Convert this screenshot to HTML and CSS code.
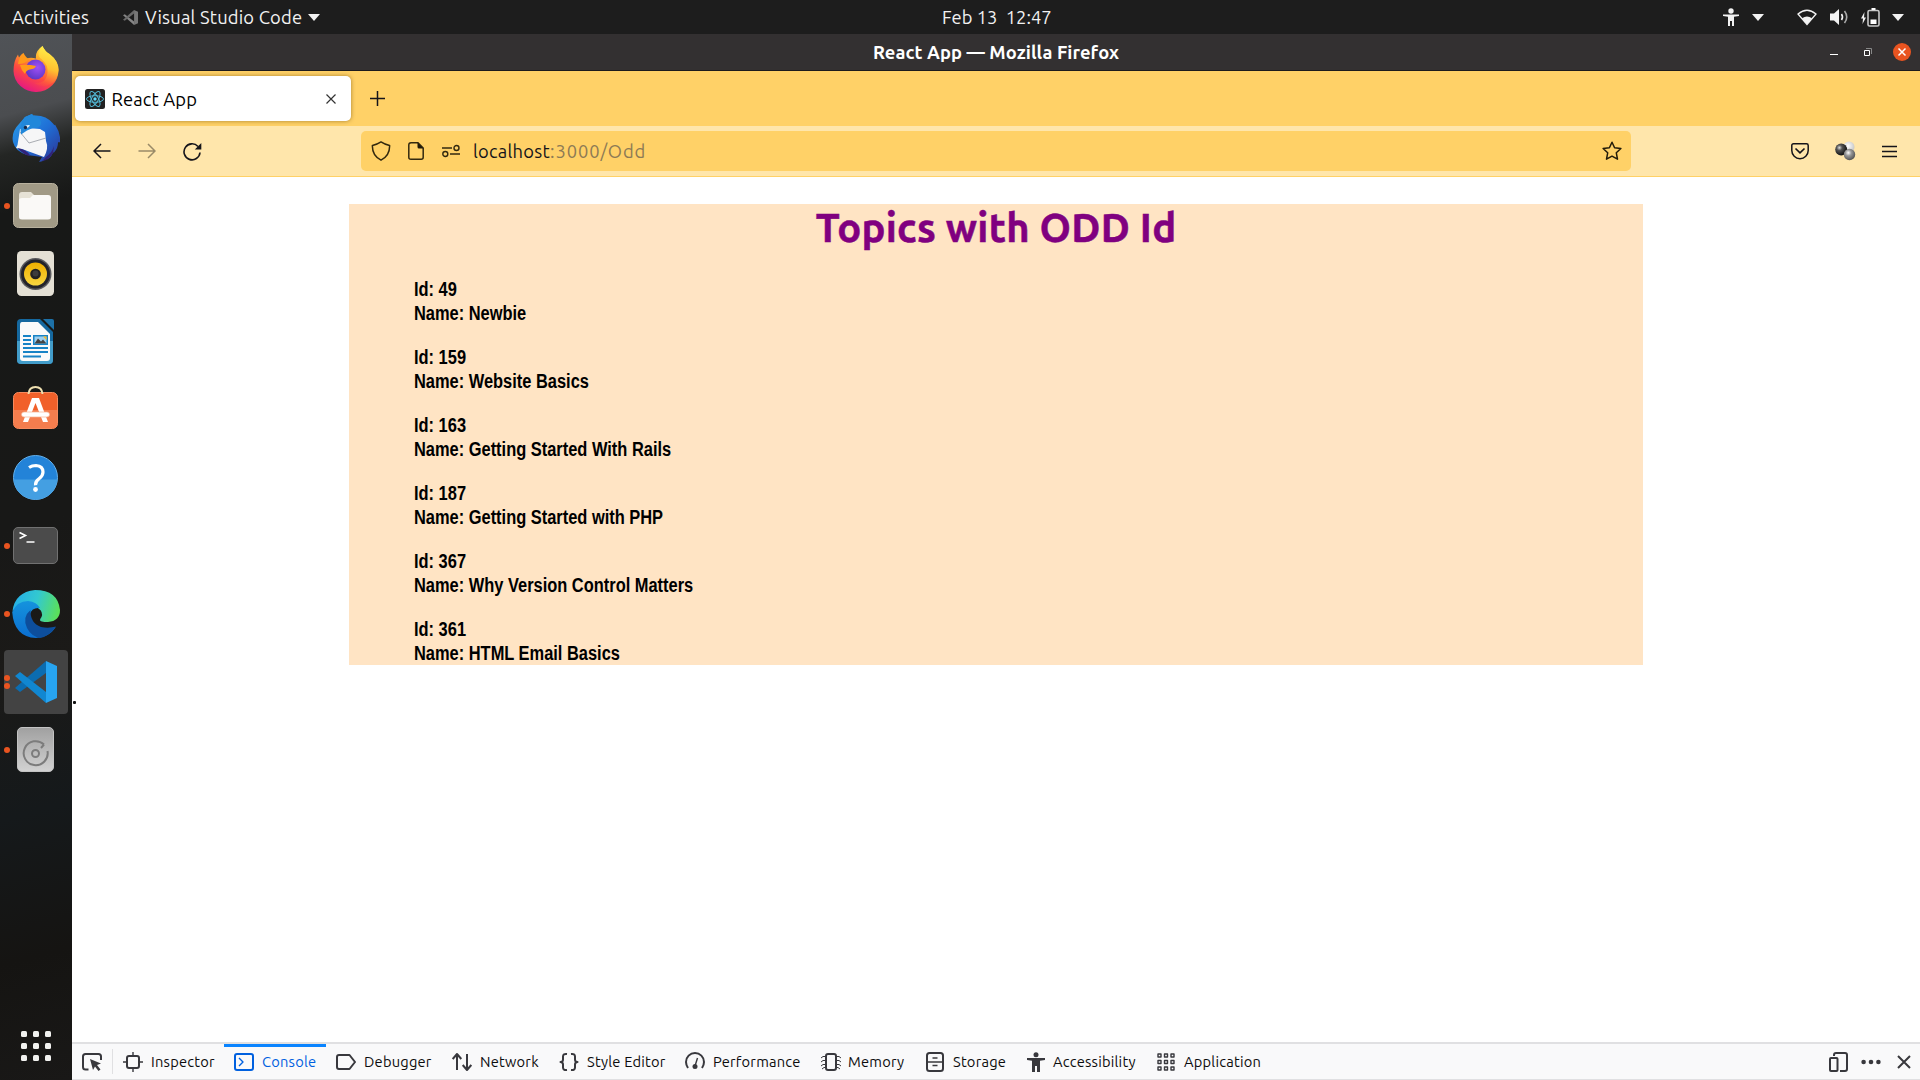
FILE: index.html
```html
<!DOCTYPE html>
<html lang="en">
<head>
<meta charset="utf-8">
<title>React App</title>
<link rel="stylesheet" href="styles.css">
</head>
<body>
<header class="topbar">
  <div class="top-left">
    <span class="t-activities">Activities</span>
    <svg class="vs-mini" width="15" height="15" viewBox="0 0 42 42"><path d="M0 15l5-3 26 20v10L0 15z" fill="#858585"/><path d="M0 27l5 3L31 10V0L0 27z" fill="#6a6a6a"/><path d="M31 0l11 5v32l-11 5z" fill="#777"/></svg>
    <span class="t-vsc">Visual Studio Code</span>
    <i class="caret"></i>
  </div>
  <span class="t-clock">Feb 13&nbsp; 12:47</span>
  <div class="top-right">
    <svg width="16" height="18" viewBox="0 0 16 18" fill="#f2f2f2"><circle cx="8" cy="3" r="2.7"/><path d="M0 6.500h16v1.600l-5 .7V18H9v-5H7v5H5V8.800L0 8.100z"/></svg>
    <i class="caret c1"></i>
    <svg class="wifi" width="20" height="17" viewBox="0 0 20 17"><path d="M1 5Q10-2.500 19 5L10 15.500z" fill="none" stroke="#f2f2f2" stroke-width="1.300"/><path d="M5 9.200q5-3.400 10 0l-5 6.300z" fill="#f2f2f2"/></svg>
    <svg class="vol" width="19" height="18" viewBox="0 0 19 18"><path d="M0 5.500h4L9 1v16l-5-4.500H0z" fill="#f2f2f2"/><path d="M11.500 6q2 3 0 6" fill="none" stroke="#f2f2f2" stroke-width="1.600"/><path d="M14.500 3q4.500 6 0 12" fill="none" stroke="#aaa" stroke-width="1.600"/></svg>
    <svg class="bat" width="19" height="19" viewBox="0 0 19 19"><path d="M3.500 4L0 10.500h2L1.500 16 5 9.500H3z" fill="#f2f2f2"/><path d="M8.500 2.500h8q1.500 0 1.500 1.500v12.500q0 1.500-1.500 1.500h-8Q7 18 7 16.500V4q0-1.500 1.500-1.500z" fill="none" stroke="#c8c8c8" stroke-width="1.600"/><path d="M10.500 0h4v2h-4zM9.500 11.500h6v4.500h-6z" fill="#fff"/></svg>
    <i class="caret c2"></i>
  </div>
</header>
<div class="desktop">
  <nav class="dock">
    <div class="app firefox">
      <svg width="46" height="47" viewBox="0 0 46 47"><defs><linearGradient id="ff" x1=".8" y1="0" x2=".3" y2="1"><stop offset="0" stop-color="#fff44f"/><stop offset=".35" stop-color="#ffa52a"/><stop offset=".65" stop-color="#ff4a40"/><stop offset="1" stop-color="#e31587"/></linearGradient><linearGradient id="ff2" x1=".6" y1="0" x2=".4" y2="1"><stop offset="0" stop-color="#fff24a"/><stop offset=".55" stop-color="#ffc030"/><stop offset="1" stop-color="#ff5a3a" stop-opacity=".2"/></linearGradient><radialGradient id="fp" cx=".6" cy=".4" r=".6"><stop offset="0" stop-color="#a050f5"/><stop offset="1" stop-color="#6038c8"/></radialGradient></defs><path d="M29.500 1q2 5 7 8 9 7 9 16A22.500 21.500 0 0 1 .500 26Q.500 16 5 9.500q.5 2 1 3Q8 9 10.500 8q-.5 4 3 5.500Q18 12 23 13.500 22 6 29.500 1z" fill="url(#ff)"/><path d="M29.500 1q2 5 7 8 9 7 9 16-.5 10-8 14-9 5-16-1 12 1 13-10 1-8-6-14Q22 10 29.500 1z" fill="url(#ff2)"/><circle cx="22.500" cy="24.500" r="10" fill="url(#fp)"/><path d="M5 19q8 0 11-5-3-1-5.500-6Q6 12 5 19zM7 20q8-1 16 1-1 3-6 3.500Q13 25 12 29 8 25 7 20z" fill="#ff9a1a"/></svg>
    </div>
    <div class="app">
      <svg width="48" height="48" viewBox="0 0 48 48"><defs><linearGradient id="tb" x1="0" y1="0" x2="1" y2="1"><stop offset="0" stop-color="#2aa0ea"/><stop offset=".5" stop-color="#1f6fd6"/><stop offset="1" stop-color="#2e2f8f"/></linearGradient></defs><path d="M13 3L20 0l1 1.500q13-1 20 8 2 3 2 1 6 9 5 18-1-1-2 0 0 6-4 10l-1 0q-2 5-6 7l0-2q-3 4-8 4.500l3-5-15-2Q3 37 1 28-1 18 7 10z" fill="url(#tb)"/><path d="M8 15L5.500 31 4 34q3 1 6 1l22 8q5-9 2-16l-1-9-5-3-13-1z" fill="#f6f6f7"/><path d="M8 18l9 11 17-5" fill="none" stroke="#a9acb2" stroke-width="1"/><path d="M13 3L20 0l1 1.500q4 0 7 4 3 5-2 8-6 0-11 3l-6 4q-2-11 4-17.500z" fill="#2187da"/><path d="M13.500 11.500q4-1 4.500 0-2 3-5 3z" fill="#e6eef6"/><circle cx="13.500" cy="13.500" r="1.700" fill="#16294a"/><path d="M5.500 34q9 1 13 8-7-1-13-8zM34 43q6-4 8-11l-1 7q-4 7-11 8z" fill="#322379"/></svg>
    </div>
    <div class="app"><i class="dot"></i>
      <svg width="45" height="45" viewBox="0 0 45 45"><rect x=".5" y=".5" width="44" height="44" rx="5" fill="#a19a86" stroke="#b8b19e"/><path d="M6 12q0-3 3-3h9l3 3v7H6z" fill="#e6e2d6"/><path d="M9 15h8l3-3h15q3 0 3 3v19q0 2.500-3 2.500H9q-3 0-3-2.500V17q0-2 3-2z" fill="#faf9f7"/></svg>
    </div>
    <div class="app">
      <svg width="37" height="45" viewBox="0 0 37 45"><defs><linearGradient id="sp" x1="0" y1="0" x2="0" y2="1"><stop offset="0" stop-color="#f0b000"/><stop offset="1" stop-color="#f7d540"/></linearGradient></defs><rect width="37" height="45" rx="4.500" fill="#e4e0d5"/><circle cx="18.500" cy="23" r="16" fill="#5a5a5e"/><circle cx="18.500" cy="23" r="14.500" fill="#23232a"/><circle cx="18.500" cy="23" r="11.500" fill="url(#sp)"/><circle cx="18.500" cy="23" r="5.300" fill="#222"/><circle cx="18.500" cy="22.500" r="3" fill="#3c3c3c"/></svg>
    </div>
    <div class="app">
      <svg width="37" height="45" viewBox="0 0 37 45"><path d="M4 0h19l13 13v28q0 4-4 4H4q-4 0-4-4V4q0-4 4-4z" fill="#15689f"/><path d="M0 22h36v19q0 4-4 4H4q-4 0-4-4z" fill="#429cc9"/><path d="M5 3h16l12 12v24q0 3-3 3H6q-3 0-3-3V6q0-3 2-3z" fill="#fafafa"/><path d="M26 0h9q2 0 2 2v9z" fill="#1d71a8"/><path d="M6 17h8M6 21h8M6 25h8M6 29h25M6 33h25M6 37.500h18" stroke="#1783c6" stroke-width="2"/><path d="M16 16h15v10H16z" fill="#1783c6"/><path d="M17.500 17.500h12v7h-12z" fill="#9fd0ef"/><path d="M17.500 24.500l3.500-5 3 3 2-2 3.500 4z" fill="#444"/><path d="M26 17.500h3.500V21z" fill="#f5b92c"/></svg>
    </div>
    <div class="app store">
      <svg width="45" height="44" viewBox="0 0 45 44"><rect x=".5" y="7.500" width="44" height="36" rx="5" fill="#f1602a" stroke="#f58a5e"/><path d="M1 25h43v14q0 4-4 4H5q-4 0-4-4z" fill="#f47d4e"/><path d="M15.500 9Q16 2 22.500 2T29.500 9" fill="none" stroke="#eedfb0" stroke-width="2"/><path d="M19 13h7l9 24h-5l-7.500-19L15 37h-5z" fill="#fff"/><rect x="8.500" y="27" width="28" height="5" rx="2.500" fill="#fff" stroke="#f6b190" stroke-width=".7"/></svg>
    </div>
    <div class="app">
      <svg width="45" height="45" viewBox="0 0 45 45"><circle cx="22.500" cy="22.500" r="22" fill="#2383d8" stroke="#63b0ec"/><path d="M1 24.500h43a21.500 20 0 0 1-43 0z" fill="#449fe2"/><path d="M16 12.500q3-2 7-2 7 .500 7 6.500 0 4-4 6.800-4 3-3.500 6.500" fill="none" stroke="#fff" stroke-width="3.200"/><circle cx="22.500" cy="34.500" r="2.400" fill="#fff"/></svg>
    </div>
    <div class="app"><i class="dot"></i>
      <svg width="45" height="37" viewBox="0 0 45 37"><rect x=".5" y=".5" width="44" height="36" rx="4.500" fill="#4b4b4b" stroke="#717171"/><path d="M6.500 5.500l6 3-6 3M13.500 15h8" fill="none" stroke="#fff" stroke-width="1.600"/></svg>
    </div>
    <div class="app"><i class="dot"></i>
      <svg width="48" height="48" viewBox="0 0 48 48"><defs><linearGradient id="eg" x1="0" y1=".3" x2="1" y2=".5"><stop offset="0" stop-color="#24aee8"/><stop offset=".5" stop-color="#33c9cf"/><stop offset="1" stop-color="#5be05a"/></linearGradient><linearGradient id="eb" x1="0" y1="0" x2="0" y2="1"><stop offset="0" stop-color="#1593dd"/><stop offset="1" stop-color="#0b6ed0"/></linearGradient></defs><path d="M.5 21Q3 2 23 0q23 0 25 20 0 11-12 12-8 0-8-2 0-1 1.500-3 2-5-3-8.500Q12 9 .500 21z" fill="url(#eg)"/><path d="M.2 22Q5 11 16 11q9 1 12 7-8-1-10 6-1 13 8 16 9 4 18-3-8 11-20 11Q2 47 .200 22z" fill="url(#eb)"/><path d="M18.500 20Q10 27 15 38q4 8 13 10 10-2 16-11.500-7 2-15 .5-11-4-10.500-17z" fill="#0d4e9c"/></svg>
    </div>
    <div class="app active"><i class="dot d1"></i><i class="dot d2"></i>
      <svg width="42" height="42" viewBox="0 0 42 42"><path d="M0 27l5 4L31 12V0L0 27z" fill="#0b6cb0"/><path d="M0 15l5-4 26 20v11L0 15z" fill="#1187d1"/><path d="M31 0l11 5v32l-11 5z" fill="#27a4f0"/></svg>
    </div>
    <div class="app"><i class="dot"></i>
      <svg width="37" height="45" viewBox="0 0 37 45"><defs><linearGradient id="dk" x1="0" y1="0" x2="0" y2="1"><stop offset="0" stop-color="#a0a0a0"/><stop offset="1" stop-color="#d2d2d2"/></linearGradient></defs><rect x=".5" y=".5" width="36" height="44" rx="4.500" fill="url(#dk)" stroke="#c3c3c3"/><path d="M27 17.500A12 12 0 1 0 30.500 24M27 17.500L24 21" fill="none" stroke="#7c7c7c" stroke-width="2"/><circle cx="18.500" cy="26.500" r="3.500" fill="none" stroke="#7c7c7c" stroke-width="2"/></svg>
    </div>
    <div class="grid-btn"><b></b><b></b><b></b><b></b><b></b><b></b><b></b><b></b><b></b></div>
  </nav>
  <section class="window">
    <div class="titlebar">
      <span class="t-title">React App — Mozilla Firefox</span>
      <div class="win-btns">
        <svg width="8" height="20" viewBox="0 0 8 20"><path d="M0 12.500h8" stroke="#fff"/></svg>
        <svg width="8" height="8" viewBox="0 0 8 8"><path d="M.5 2.500h5v5h-5z" fill="none" stroke="#fff"/><path d="M2 .5h5.500V6" fill="none" stroke="#888"/></svg>
        <svg width="18" height="18" viewBox="0 0 18 18"><circle cx="9" cy="9" r="9" fill="#e95420"/><path d="M5.500 5.500l7 7M12.500 5.500l-7 7" stroke="#fff" stroke-width="1.500"/></svg>
      </div>
    </div>
    <div class="tabs">
      <div class="tab">
        <svg width="20" height="20" viewBox="0 0 20 20"><rect width="20" height="20" rx="2.500" fill="#222"/><g fill="none" stroke="#53b9d6" stroke-width="1"><ellipse cx="10" cy="10" rx="8.500" ry="3.300"/><ellipse cx="10" cy="10" rx="8.500" ry="3.300" transform="rotate(60 10 10)"/><ellipse cx="10" cy="10" rx="8.500" ry="3.300" transform="rotate(120 10 10)"/></g><circle cx="10" cy="10" r="1.700" fill="#61dafb"/></svg>
        <span class="t-tab">React App</span>
        <svg class="tab-x" width="10" height="10" viewBox="0 0 10 10"><path d="M.5.500l9 9M9.500.500l-9 9" stroke="#333" stroke-width="1.200"/></svg>
      </div>
      <svg class="plus" width="15" height="15" viewBox="0 0 15 15"><path d="M7.500 0v15M0 7.500h15" stroke="#15141a" stroke-width="1.500"/></svg>
    </div>
    <div class="toolbar">
      <svg class="back" width="18" height="16" viewBox="0 0 18 16"><path d="M17.500 8H1M8 1L1 8l7 7" fill="none" stroke="#15141a" stroke-width="1.500"/></svg>
      <svg class="fwd" width="18" height="16" viewBox="0 0 18 16"><path d="M.5 8H17M10 1l7 7-7 7" fill="none" stroke="#9a8b68" stroke-width="1.500"/></svg>
      <svg class="reload" width="19" height="19" viewBox="0 0 19 19"><path d="M15 4.500A8 8 0 1 0 17 10.500" fill="none" stroke="#15141a" stroke-width="1.600"/><path d="M18.300 1v6.500h-6.500z" fill="#15141a"/></svg>
      <div class="urlbar">
        <svg class="shield" width="20" height="20" viewBox="0 0 20 20"><path d="M10 .900Q14 3.600 18.600 4.400 19 14.500 10 19.200 1 14.500 1.400 4.400 6 3.600 10 .900z" fill="none" stroke="#33290f" stroke-width="1.500" stroke-linejoin="round"/></svg>
        <svg class="page-ico" width="16" height="18" viewBox="0 0 16 18"><path d="M3 .800h7L15.200 6v9.200q0 2-2 2H3q-2.200 0-2.200-2V3Q.800.800 3 .800z" fill="none" stroke="#33290f" stroke-width="1.500"/><path d="M9.500.500L15.500 6.500h-4.500q-1.500 0-1.500-1.500z" fill="#221b0a"/></svg>
        <svg class="perm" width="18" height="14" viewBox="0 0 18 14"><path d="M0 4h10M8 10h10" stroke="#33290f" stroke-width="1.500"/><circle cx="14.500" cy="4" r="2.500" fill="none" stroke="#33290f" stroke-width="1.400"/><circle cx="3.300" cy="10" r="2.500" fill="none" stroke="#33290f" stroke-width="1.400"/></svg>
        <span class="t-url">localhost<em>:3000/Odd</em></span>
        <svg class="star" width="20" height="20" viewBox="0 0 20 20"><path d="M10 1.200l2.600 5.500 6.300.800-4.600 4.300 1.200 6.400L10 15.200l-5.500 3 1.200-6.400L1.100 7.500l6.300-.8z" fill="none" stroke="#221b0a" stroke-width="1.500" stroke-linejoin="round"/></svg>
      </div>
      <svg class="pocket" width="18" height="17" viewBox="0 0 18 17"><path d="M2.500.800h13q1.700 0 1.700 1.700V7.500a8.200 8.200 0 0 1-16.400 0V2.500Q.800.800 2.500.800z" fill="none" stroke="#15141a" stroke-width="1.500"/><path d="M4.500 5.500L9 9.800l4.500-4.300" fill="none" stroke="#15141a" stroke-width="1.700"/></svg>
      <svg class="balls" width="21" height="20" viewBox="0 0 21 20"><defs><radialGradient id="b1" cx=".35" cy=".35" r=".65"><stop offset="0" stop-color="#ddd"/><stop offset=".35" stop-color="#555"/><stop offset="1" stop-color="#111"/></radialGradient><radialGradient id="b2" cx=".4" cy=".4" r=".7"><stop offset="0" stop-color="#fff"/><stop offset="1" stop-color="#c0c0c0"/></radialGradient><radialGradient id="b3" cx=".4" cy=".35" r=".65"><stop offset="0" stop-color="#fff"/><stop offset=".4" stop-color="#999"/><stop offset="1" stop-color="#555"/></radialGradient></defs><circle cx="14" cy="6" r="5.500" fill="url(#b2)"/><circle cx="6.200" cy="8.500" r="6" fill="url(#b1)"/><circle cx="14.500" cy="13.500" r="5.700" fill="url(#b3)"/></svg>
      <svg class="menu" width="15" height="13" viewBox="0 0 15 13"><path d="M0 1.500h15M0 6.500h15M0 11.500h15" stroke="#15141a" stroke-width="1.500"/></svg>
    </div>
    <main class="page">
      <article class="topics">
        <h1>Topics with ODD Id</h1>
        <p>Id: 49<br>Name: Newbie</p>
        <p>Id: 159<br>Name: Website Basics</p>
        <p>Id: 163<br>Name: Getting Started With Rails</p>
        <p>Id: 187<br>Name: Getting Started with PHP</p>
        <p>Id: 367<br>Name: Why Version Control Matters</p>
        <p>Id: 361<br>Name: HTML Email Basics</p>
      </article>
      <div class="bullet"></div>
    </main>
    <footer class="devtools">
      <div class="picker"><svg width="20" height="18" viewBox="0 0 20 18"><path d="M6.500 16.500H3.500q-2.500 0-2.500-2.500V3.500Q1 1 3.500 1h13Q19 1 19 3.500V7" fill="none" stroke="#38383d" stroke-width="2"/><path d="M8 6l11 4.500-4 1.500 3.500 4.500-2 1.500-3.500-4.500-2 3.500z" fill="#38383d"/></svg></div>
      <div class="dt w1"><svg viewBox="0 0 20 20"><rect x="4" y="4" width="12" height="12" rx="2" class="s"/><path d="M10 0v4M10 16v4M0 10h4M16 10h4" class="s thin"/></svg><span>Inspector</span></div>
      <div class="dt w2 on"><svg viewBox="0 0 20 20"><rect x="1" y="2" width="18" height="16" rx="2" class="s"/><path d="M5 6l4 4-4 4" class="s thin"/></svg><span>Console</span></div>
      <div class="dt w3"><svg viewBox="0 0 20 20"><path d="M3 3h10.500l5.500 7-5.500 7H3q-2 0-2-2V5q0-2 2-2z" class="s"/></svg><span>Debugger</span></div>
      <div class="dt w4"><svg viewBox="0 0 20 20"><path d="M5 18V2M.700 7L5 2l4.300 5M15 2v16M10.700 13l4.300 5 4.300-5" class="s"/></svg><span>Network</span></div>
      <div class="dt w5"><svg viewBox="0 0 20 20"><path d="M8 2q-4-.5-4 2.500v3Q4 10 1.500 10 4 10 4 12.500v3q0 3 4 2.500M12 2q4-.5 4 2.500v3q0 2.500 2.500 2.500-2.500 0-2.500 2.500v3q0 3-4 2.500" class="s"/></svg><span>Style Editor</span></div>
      <div class="dt w6"><svg viewBox="0 0 20 20"><path d="M3 16Q1 13 1 10a9 9 0 0 1 18 0q0 3-2 6" class="s"/><path d="M10 14l2.500-8" class="s thin"/><circle cx="10" cy="14.500" r="2.500" class="f"/></svg><span>Performance</span></div>
      <div class="dt w7"><svg viewBox="0 0 20 20"><rect x="5" y="2" width="10" height="16" rx="2" class="s"/><path d="M0 6l2-1.500h3M0 10l2-1.500h3M0 14l2-1.500h3M1 17l2-1.500h2M20 6l-2-1.500h-3M20 10l-2-1.500h-3M20 14l-2-1.500h-3M19 17l-2-1.500h-2" class="s hair"/></svg><span>Memory</span></div>
      <div class="dt w8"><svg viewBox="0 0 20 20"><rect x="2" y="1" width="16" height="18" rx="2.500" class="s"/><path d="M2 10h16M7.500 6h5M7.500 13.500h5" class="s thin"/></svg><span>Storage</span></div>
      <div class="dt w9"><svg viewBox="0 0 20 20"><circle cx="10" cy="2.700" r="2.500" class="f"/><path d="M1 6h18v2l-5 .800V20h-3v-6H9v6H6V8.800L1 8z" class="f"/></svg><span>Accessibility</span></div>
      <div class="dt w10"><svg viewBox="0 0 20 20"><path d="M2 2h3v3H2zM8.500 2h3v3h-3zM15 2h3v3h-3zM2 8.500h3v3H2zM8.500 8.500h3v3h-3zM15 8.500h3v3h-3zM2 15h3v3H2zM8.500 15h3v3h-3zM15 15h3v3h-3z" class="s thin"/></svg><span>Application</span></div>
      <div class="dt-right">
        <svg width="20" height="20" viewBox="0 0 20 20"><path d="M5 4V3q0-2 2-2h9q2 0 2 2v14q0 2-2 2h-5" class="s"/><rect x="1" y="6" width="7.500" height="13" rx="1" class="s"/></svg>
        <svg width="20" height="20" viewBox="0 0 20 20"><circle cx="2.600" cy="10" r="2.300" class="f"/><circle cx="10" cy="10" r="2.300" class="f"/><circle cx="17.400" cy="10" r="2.300" class="f"/></svg>
        <svg width="14" height="14" viewBox="0 0 14 14"><path d="M1 1l12 12M13 1L1 13" class="s"/></svg>
      </div>
    </footer>
  </section>
</div>
</body>
</html>
```
FILE: styles.css
```css
* { box-sizing: border-box; }
body { margin: 0; width: 1920px; height: 1080px; overflow: hidden; display: flex; flex-direction: column; font-family: Ubuntu, "Noto Sans", sans-serif; font-size: 18.33px; background: #fff; }
svg { display: block; flex: none; }
span { white-space: nowrap; }

.topbar { height: 34px; flex: none; background: #1d1d1d; color: #f2f2f2; display: grid; grid-template-columns: 942px 110px 1fr; align-items: center; line-height: 34px; }
.top-left, .top-right { display: flex; align-items: center; }
.top-left { padding-left: 12px; }
.vs-mini { margin: 0 7px 0 34px; }
.t-activities { width: 77px; letter-spacing: .2px; }
.t-vsc { width: 156px; letter-spacing: .2px; }
.caret { border: 6px solid transparent; border-top: 7px solid #f2f2f2; border-bottom: 0; margin-left: 7px; }
.top-right { justify-content: flex-end; padding-right: 16px; }
.c1 { margin: 0 33px 0 13px; }
.vol { margin-left: 14px; }
.bat { margin-left: 12px; }
.c2 { margin-left: 12px; }
.wifi { margin-right: -1px; }

.desktop { flex: 1; min-height: 0; display: flex; }
.dock { width: 72px; padding-top: 2px; display: flex; flex-direction: column; background: linear-gradient(165deg, #505357 0, #4b4d50 80px, #242624 118px, #171817 175px, #181817 480px, #1b1a18 620px, #15191b 760px, #151412 900px, #191817 100%); }
.app { height: 68px; flex: none; display: flex; align-items: center; justify-content: center; position: relative; }
.app svg[width="45"], .app svg[width="37"] { margin: -1px 0 0 -1px; }
.firefox { padding-bottom: 3px; }
.store { padding-bottom: 6px; }
.active::before { content: ""; position: absolute; inset: 2px 4px; border-radius: 4px; background: #434343; }
.active svg { position: relative; }
.dot { position: absolute; left: 4px; top: 31px; width: 6px; height: 6px; border-radius: 50%; background: #e95420; }
.d1 { top: 27px; }
.d2 { top: 35px; }
.grid-btn { margin: auto auto 19px; display: grid; grid-template-columns: repeat(3, 6px); gap: 6px; }
.grid-btn b { height: 6px; border-radius: 1.5px; background: #f2f2f0; }

.window { flex: 1; min-width: 0; display: flex; flex-direction: column; background: #fff; }
.titlebar { height: 37px; flex: none; background: #333031; border-bottom: 1px solid #1d1b1c; color: #fff; font-weight: 700; display: flex; align-items: center; padding: 0 9px 0 801px; line-height: 36px; }
.t-title { letter-spacing: .09px; }
.win-btns { margin-left: auto; display: flex; align-items: center; gap: 26px; }
.win-btns svg:last-child { margin-left: -5px; }
.tabs { height: 55px; flex: none; background: #ffd167; display: flex; align-items: center; padding-left: 3px; }
.tab { width: 276px; height: 45px; background: #fff; border-radius: 5px; box-shadow: 0 0 4px rgba(90,60,0,.55); display: flex; align-items: center; padding: 0 15px 0 10px; }
.t-tab { margin-left: 6.5px; padding-top: 1px; letter-spacing: .15px; }
.tab-x { margin-left: auto; }
.plus { margin-left: 19px; }
.toolbar { height: 51px; flex: none; background: #ffe6ab; border-bottom: 1px solid #ffd167; display: flex; align-items: center; padding-left: 21px; }
.fwd { margin-left: 27px; }
.reload { margin-left: 27px; }
.urlbar { margin-left: 159px; width: 1270px; height: 40px; border-radius: 5px; background: #ffd167; display: flex; align-items: center; padding: 0 9px 0 10px; }
.page-ico { margin-left: 17px; }
.perm { margin-left: 18px; }
.t-url { margin-left: 13px; color: #15141a; letter-spacing: .28px; }
.t-url em { font-style: normal; color: #8c7a55; letter-spacing: .9px; }
.star { margin-left: auto; }
.pocket { margin-left: 160px; }
.balls { margin-left: 26px; }
.menu { margin-left: 26px; }

.page { flex: 1; min-height: 0; padding-top: 27px; }
.topics { width: 1294px; height: 461px; margin-left: 277px; padding-left: 64px; background: #ffe4c4; color: #000; font: 700 20px/24px "Liberation Sans", sans-serif; }
.topics h1 { margin: 0 0 27px -64px; padding-top: 1px; height: 46px; line-height: 46px; font-family: Ubuntu, "Noto Sans", sans-serif; font-size: 40px; letter-spacing: .25px; text-align: center; color: purple; -webkit-text-stroke: .5px purple; }
.topics p { margin: 0 0 20px .5px; transform: scaleX(.821); transform-origin: 0 0; }
.bullet { width: 3px; height: 3px; margin: 36px 0 0 1px; border-radius: 1px; background: #111; }

.devtools { height: 38px; flex: none; background: #f9f9fa; border-top: 2px solid #e0e0e2; border-bottom: 1px solid #e0e0e2; display: flex; align-items: stretch; font-size: 14.67px; letter-spacing: .22px; color: #0c0c0d; }
.picker { width: 41px; display: flex; align-items: center; padding-left: 10px; position: relative; }
.picker::after { content: ""; position: absolute; right: 0; top: 5px; bottom: 5px; width: 1px; background: #e0e0e2; }
.dt { display: flex; align-items: center; gap: 8px; padding-left: 10px; border-top: 3px solid transparent; padding-bottom: 3px; }
.dt svg { width: 20px; height: 20px; }
.s { fill: none; stroke: #38383d; stroke-width: 2; stroke-linejoin: round; }
.thin { stroke-width: 1.4; }
.hair { stroke-width: 1; }
.f { fill: #38383d; }
.on { color: #0060df; border-top-color: #0a84ff; }
.on .s { stroke: #0060df; }
.w1 { width: 111px; } .w2 { width: 102px; } .w3 { width: 116px; } .w4 { width: 107px; } .w5 { width: 126px; }
.w6 { width: 136px; } .w7 { width: 104px; } .w8 { width: 101px; } .w9 { width: 130px; } .w10 { width: 126px; }
.w7, .w9 { gap: 7px; }
.dt-right { margin-left: auto; display: flex; align-items: center; gap: 12px; padding-right: 9px; }
.dt-right svg:last-child { margin-left: 4px; }
```
